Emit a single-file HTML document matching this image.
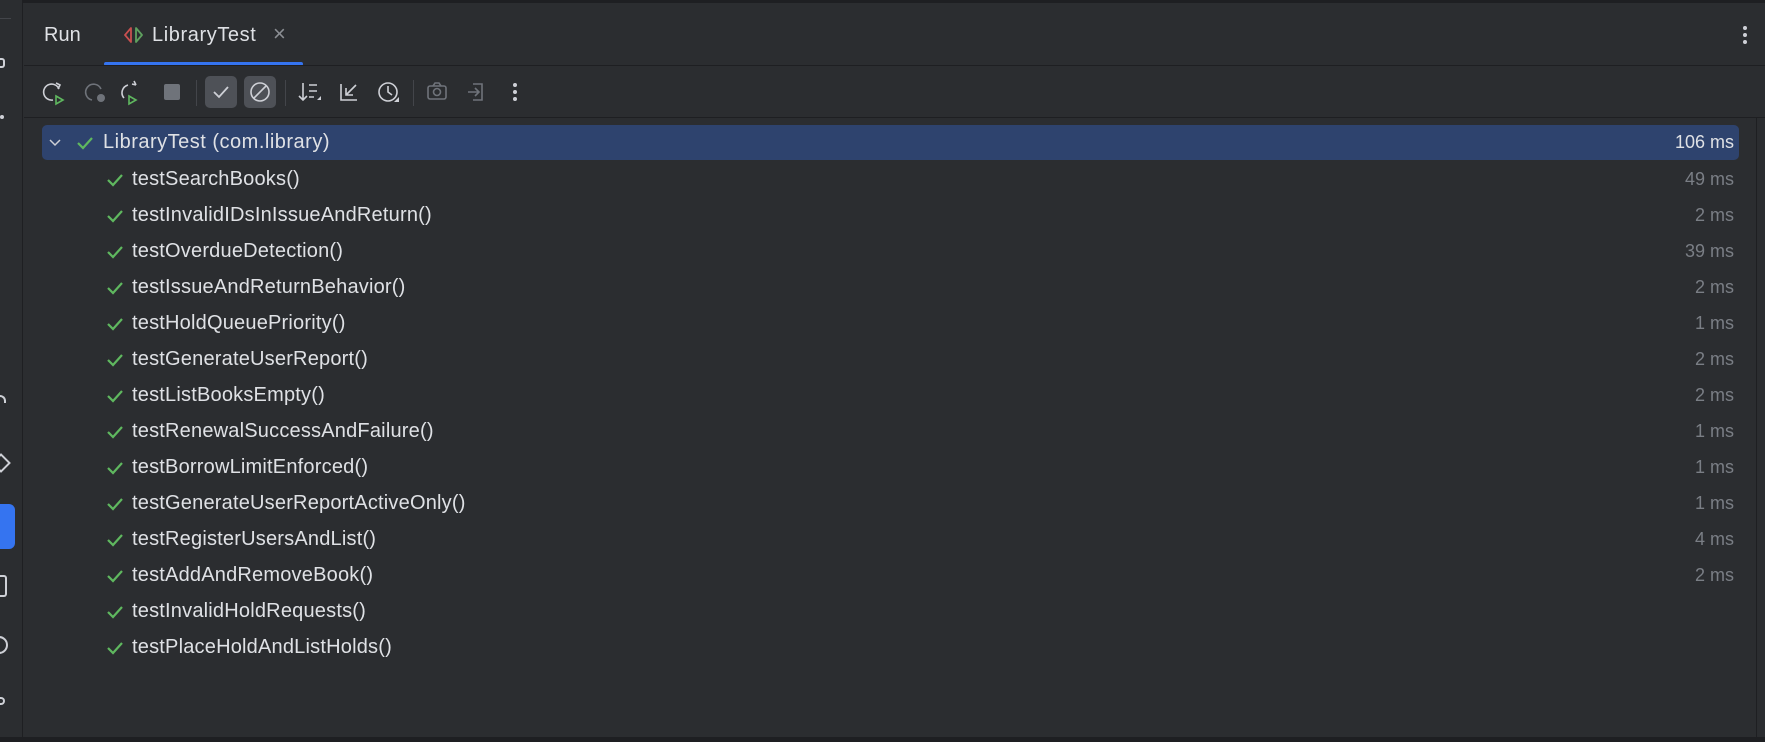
<!DOCTYPE html>
<html><head><meta charset="utf-8"><style>
*{margin:0;padding:0;box-sizing:border-box}
body{width:1765px;height:742px;background:#2b2d30;font-family:"Liberation Sans",sans-serif;color:#dfe1e5;position:relative;overflow:hidden}
.a{position:absolute}
.row{position:absolute;left:0;width:1740px;height:36px;font-size:20px;line-height:36px;letter-spacing:0.2px}
.row .t{position:absolute;left:132px}
.row .ms{position:absolute;right:6px;color:#7a7e85;font-size:18px;letter-spacing:0}
.row svg{position:absolute;left:106px;top:11px}
</style></head><body>
<div class="a" style="left:0;top:0;width:1765px;height:3px;background:#1e1f22"></div>
<div class="a" style="left:0;top:0;width:23px;height:742px;background:#2b2d30;border-right:1px solid #1e1f22"></div>
<div class="a" style="left:0;top:18px;width:11px;height:1px;background:#43454a"></div>
<div class="a" style="left:0;top:58px;width:5px;height:10px;border:2px solid #ced0d6;border-left:none;border-radius:0 3px 3px 0"></div>
<div class="a" style="left:0;top:115px;width:4px;height:4px;border-radius:2px;background:#ced0d6"></div>
<div class="a" style="left:0;top:395px;width:6px;height:8px;border-top:2px solid #ced0d6;border-right:2px solid #ced0d6;border-radius:0 6px 0 0"></div>
<div class="a" style="left:-6px;top:456px;width:14px;height:14px;border:2px solid #ced0d6;transform:rotate(45deg)"></div>
<div class="a" style="left:0;top:504px;width:15px;height:45px;background:#3574f0;border-radius:0 6px 6px 0"></div>
<div class="a" style="left:0;top:575px;width:7px;height:22px;border:2px solid #ced0d6;border-left:none;border-radius:0 3px 3px 0"></div>
<div class="a" style="left:-10px;top:636px;width:18px;height:18px;border:2px solid #ced0d6;border-radius:50%"></div>
<div class="a" style="left:0;top:697px;width:5px;height:8px;border:2px solid #ced0d6;border-left:none;border-radius:0 4px 4px 0"></div>

<div class="a" style="left:44px;top:23px;font-size:20px;line-height:24px">Run</div>
<svg class="a" style="left:122px;top:25px" width="24" height="20" viewBox="0 0 24 20"><path d="M9 3 L3 10 L9 17 Z" fill="none" stroke="#c94f4f" stroke-width="1.8" stroke-linejoin="round"/><path d="M14 3 L20 10 L14 17 Z" fill="none" stroke="#5fa15f" stroke-width="1.8" stroke-linejoin="round"/></svg>
<div class="a" style="left:152px;top:23px;font-size:20px;line-height:24px;letter-spacing:0.6px">LibraryTest</div>
<div class="a" style="left:273px;top:22px;font-size:22px;color:#8c8f94;line-height:24px">×</div>
<div class="a" style="left:104px;top:62px;width:199px;height:4px;background:#3574f0;border-radius:2px"></div>
<div class="a" style="left:24px;top:65px;width:1741px;height:1px;background:#1e1f22"></div>
<div class="a" style="left:1743px;top:26px;width:4px;height:4px;border-radius:2px;background:#ced0d6"></div>
<div class="a" style="left:1743px;top:33px;width:4px;height:4px;border-radius:2px;background:#ced0d6"></div>
<div class="a" style="left:1743px;top:40px;width:4px;height:4px;border-radius:2px;background:#ced0d6"></div>

<svg class="a" style="left:24px;top:70px" width="520" height="44" viewBox="24 70 520 44" fill="none" stroke-width="1.6">
<path d="M59 89 A8 8 0 1 0 53 100" stroke="#ced0d6"/><path d="M56 83 l4 2 -2 4" stroke="#ced0d6"/><path d="M56 96 l7 4 -7 4z" stroke="#5fb85f"/>
<path d="M101 89 A8 8 0 1 0 92 100" stroke="#6f737a"/><circle cx="101" cy="98" r="4" fill="#6f737a" stroke="none"/>
<path d="M128 85 A8 8 0 0 0 124 98" stroke="#ced0d6"/><path d="M136 85 l-2 -4 M136 85 l-4 -1" stroke="#ced0d6"/><path d="M129 96 l7 4 -7 4z" stroke="#5fb85f"/>
<rect x="164" y="84" width="16" height="16" rx="2" fill="#6f737a" stroke="none"/>
<rect x="196" y="80" width="1" height="26" fill="#43454a" stroke="none"/>
<rect x="205" y="76" width="32" height="32" rx="5" fill="#4e5157" stroke="none"/>
<path d="M214 92 l5 5 9 -10" stroke="#ced0d6" stroke-width="1.8"/>
<rect x="244" y="76" width="32" height="32" rx="5" fill="#4e5157" stroke="none"/>
<circle cx="260" cy="92" r="9" stroke="#ced0d6"/><path d="M254 98 L266 86" stroke="#ced0d6"/>
<rect x="285" y="80" width="1" height="26" fill="#43454a" stroke="none"/>
<path d="M303 83 v17 M299 96 l4 4 4 -4 M309 85 h8 M309 91 h8 M309 97 h5" stroke="#ced0d6"/><path d="M317 100 l4 0 0 -4z" fill="#ced0d6" stroke="none"/>
<path d="M341 84 v16 h16 M356 85 l-10 10 M346 88 v7 h7" stroke="#ced0d6"/>
<circle cx="388" cy="92" r="9" stroke="#ced0d6"/><path d="M388 86 v6 l4 3" stroke="#ced0d6"/><path d="M394 102 l5 0 0 -5z" fill="#ced0d6" stroke="none"/>
<rect x="413" y="80" width="1" height="26" fill="#43454a" stroke="none"/>
<rect x="428" y="86" width="18" height="13" rx="2" stroke="#6f737a"/><circle cx="437" cy="92" r="3.5" stroke="#6f737a"/><path d="M433 86 l2 -3 h4 l2 3" stroke="#6f737a"/>
<path d="M473 84 h9 v16 h-9 M468 92 h10 M475 88 l4 4 -4 4" stroke="#6f737a"/>
<circle cx="515" cy="85" r="2" fill="#ced0d6" stroke="none"/><circle cx="515" cy="92" r="2" fill="#ced0d6" stroke="none"/><circle cx="515" cy="99" r="2" fill="#ced0d6" stroke="none"/>
</svg>
<div class="a" style="left:24px;top:117px;width:1741px;height:1px;background:#1e1f22"></div>
<div class="a" style="left:1756px;top:118px;width:1px;height:619px;background:#1e1f22"></div>

<div class="a" style="left:42px;top:125px;width:1697px;height:35px;background:#2e436e;border-radius:5px"></div>
<div class="row" style="top:125px;height:35px;line-height:35px">
<svg style="left:49px;top:13px" width="12" height="10" viewBox="0 0 12 10"><path d="M1 2 l5 5 5 -5" fill="none" stroke="#ced0d6" stroke-width="1.5"/></svg>
<svg style="left:76px;top:10px" width="18" height="16" viewBox="0 0 18 16"><path d="M2 8 l5 5 9 -10" fill="none" stroke="#5fb85f" stroke-width="2.2"/></svg>
<span class="t" style="left:103px;letter-spacing:0.5px">LibraryTest (com.library)</span><span class="ms" style="color:#dfe1e5">106 ms</span></div>

<div class="row" style="top:161px"><svg width="18" height="16"><path d="M2 8 l5 5 9 -10" fill="none" stroke="#5fb85f" stroke-width="2.2"/></svg><span class="t">testSearchBooks()</span><span class="ms">49 ms</span></div>
<div class="row" style="top:197px"><svg width="18" height="16"><path d="M2 8 l5 5 9 -10" fill="none" stroke="#5fb85f" stroke-width="2.2"/></svg><span class="t">testInvalidIDsInIssueAndReturn()</span><span class="ms">2 ms</span></div>
<div class="row" style="top:233px"><svg width="18" height="16"><path d="M2 8 l5 5 9 -10" fill="none" stroke="#5fb85f" stroke-width="2.2"/></svg><span class="t">testOverdueDetection()</span><span class="ms">39 ms</span></div>
<div class="row" style="top:269px"><svg width="18" height="16"><path d="M2 8 l5 5 9 -10" fill="none" stroke="#5fb85f" stroke-width="2.2"/></svg><span class="t">testIssueAndReturnBehavior()</span><span class="ms">2 ms</span></div>
<div class="row" style="top:305px"><svg width="18" height="16"><path d="M2 8 l5 5 9 -10" fill="none" stroke="#5fb85f" stroke-width="2.2"/></svg><span class="t">testHoldQueuePriority()</span><span class="ms">1 ms</span></div>
<div class="row" style="top:341px"><svg width="18" height="16"><path d="M2 8 l5 5 9 -10" fill="none" stroke="#5fb85f" stroke-width="2.2"/></svg><span class="t">testGenerateUserReport()</span><span class="ms">2 ms</span></div>
<div class="row" style="top:377px"><svg width="18" height="16"><path d="M2 8 l5 5 9 -10" fill="none" stroke="#5fb85f" stroke-width="2.2"/></svg><span class="t">testListBooksEmpty()</span><span class="ms">2 ms</span></div>
<div class="row" style="top:413px"><svg width="18" height="16"><path d="M2 8 l5 5 9 -10" fill="none" stroke="#5fb85f" stroke-width="2.2"/></svg><span class="t">testRenewalSuccessAndFailure()</span><span class="ms">1 ms</span></div>
<div class="row" style="top:449px"><svg width="18" height="16"><path d="M2 8 l5 5 9 -10" fill="none" stroke="#5fb85f" stroke-width="2.2"/></svg><span class="t">testBorrowLimitEnforced()</span><span class="ms">1 ms</span></div>
<div class="row" style="top:485px"><svg width="18" height="16"><path d="M2 8 l5 5 9 -10" fill="none" stroke="#5fb85f" stroke-width="2.2"/></svg><span class="t">testGenerateUserReportActiveOnly()</span><span class="ms">1 ms</span></div>
<div class="row" style="top:521px"><svg width="18" height="16"><path d="M2 8 l5 5 9 -10" fill="none" stroke="#5fb85f" stroke-width="2.2"/></svg><span class="t">testRegisterUsersAndList()</span><span class="ms">4 ms</span></div>
<div class="row" style="top:557px"><svg width="18" height="16"><path d="M2 8 l5 5 9 -10" fill="none" stroke="#5fb85f" stroke-width="2.2"/></svg><span class="t">testAddAndRemoveBook()</span><span class="ms">2 ms</span></div>
<div class="row" style="top:593px"><svg width="18" height="16"><path d="M2 8 l5 5 9 -10" fill="none" stroke="#5fb85f" stroke-width="2.2"/></svg><span class="t">testInvalidHoldRequests()</span></div>
<div class="row" style="top:629px"><svg width="18" height="16"><path d="M2 8 l5 5 9 -10" fill="none" stroke="#5fb85f" stroke-width="2.2"/></svg><span class="t">testPlaceHoldAndListHolds()</span></div>

<div class="a" style="left:0;top:737px;width:1765px;height:5px;background:#1e1f22"></div>
</body></html>
